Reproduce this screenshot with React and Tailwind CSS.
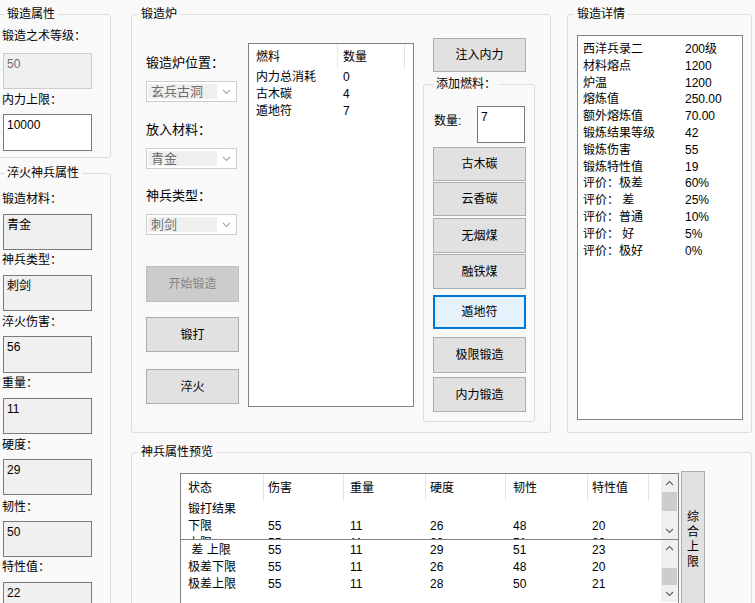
const BG = 'bg-[#f9f9f9]';

function Group({ title, className = '', titleClass = 'left-[6px]', children }) {
  return (
    <div className={`relative border border-[#dcdcdc] rounded-[3px] ${className}`}>
      <span className={`absolute -top-[9px] ${titleClass} px-[3px] leading-[16px] ${BG} whitespace-nowrap`}>
        {title}
      </span>
      {children}
    </div>
  );
}

function Btn({ children, className = '', variant = 'normal' }) {
  const look =
    variant === 'disabled'
      ? 'bg-[#cccccc] border border-[#bfbfbf] text-[#838383]'
      : variant === 'focus'
      ? 'bg-[#e5f1fb] border-2 border-[#0078d7]'
      : 'bg-[#e1e1e1] border border-[#adadad]';
  return (
    <div className={`flex items-center justify-center leading-[16px] ${look} ${className}`}>{children}</div>
  );
}

function TextBox({ children, className = '', kind = 'readonly' }) {
  const look =
    kind === 'disabled'
      ? 'bg-[#f0f0f0] border-[#cccccc] text-[#6d6d6d]'
      : kind === 'white'
      ? 'bg-white border-[#7a7a7a]'
      : 'bg-[#f0f0f0] border-[#7a7a7a]';
  return (
    <div className={`border pl-[3px] pt-[2px] leading-[16px] ${look} ${className}`}>{children}</div>
  );
}

function Chevron({ up = false, color = '#606060' }) {
  return (
    <svg width="9" height="6" viewBox="0 0 9 6">
      <path
        d={up ? 'M1 5 L4.5 1.5 L8 5' : 'M1 1 L4.5 4.5 L8 1'}
        fill="none"
        stroke={color}
        strokeWidth="1.1"
      />
    </svg>
  );
}

function Combo({ children, className = '' }) {
  return (
    <div className={`w-[91px] h-[21px] border border-[#cccccc] bg-white flex items-center pl-[1px] pr-[5px] ${className}`}>
      <span className="w-[69px] h-[15px] bg-[#efefef] pl-[3px] leading-[15px] text-[13px] text-[#6d6d6d]">
        {children}
      </span>
      <span className="ml-auto flex">
        <Chevron color="#a8a8a8" />
      </span>
    </div>
  );
}

const quench = [
  { label: '锻造材料：', value: '青金', lm: 'mt-[17px]', bm: 'mt-[7px] h-[36px]' },
  { label: '神兵类型：', value: '刺剑', lm: 'mt-[2px]', bm: 'mt-[7px] h-[36px]' },
  { label: '淬火伤害：', value: '56', lm: 'mt-[3px]', bm: 'mt-[6px] h-[37px]' },
  { label: '重量：', value: '11', lm: 'mt-[2px]', bm: 'mt-[7px] h-[36px]' },
  { label: '硬度：', value: '29', lm: 'mt-[3px]', bm: 'mt-[6px] h-[36px]' },
  { label: '韧性：', value: '50', lm: 'mt-[4px]', bm: 'mt-[6px] h-[36px]' },
  { label: '特性值：', value: '22', lm: 'mt-[2px]', bm: 'mt-[7px] h-[36px]' },
];

const fuels = [
  ['内力总消耗', '0'],
  ['古木碳', '4'],
  ['遁地符', '7'],
];

const fuelButtons = [
  { text: '古木碳', cls: 'mt-[4px] h-[34px]' },
  { text: '云香碳', cls: 'mt-[1px] h-[34px]' },
  { text: '无烟煤', cls: 'mt-[2px] h-[35px]' },
  { text: '融铁煤', cls: 'mt-[1px] h-[35px]' },
  { text: '遁地符', cls: 'mt-[6px] h-[34px]', variant: 'focus' },
  { text: '极限锻造', cls: 'mt-[8px] h-[36px]' },
  { text: '内力锻造', cls: 'mt-[4px] h-[35px]' },
];

const details = [
  ['西洋兵录二', '200级'],
  ['材料熔点', '1200'],
  ['炉温', '1200'],
  ['熔炼值', '250.00'],
  ['额外熔炼值', '70.00'],
  ['锻炼结果等级', '42'],
  ['锻炼伤害', '55'],
  ['锻炼特性值', '19'],
  ['评价：极差', '60%'],
  ['评价： 差', '25%'],
  ['评价：普通', '10%'],
  ['评价： 好', '5%'],
  ['评价：极好', '0%'],
];

const cols = [
  { name: '状态', cls: 'w-[83px] pl-[7px]' },
  { name: '伤害', cls: 'w-[80px] pl-[4px]' },
  { name: '重量', cls: 'w-[82px] pl-[6px]' },
  { name: '硬度', cls: 'w-[80px] pl-[4px]' },
  { name: '韧性', cls: 'w-[82px] pl-[7px]' },
  { name: '特性值', cls: 'w-[61px] pl-[4px]' },
];

const forged = [
  ['锻打结果', '', '', '', '', ''],
  ['下限', '55', '11', '26', '48', '20'],
  ['上限', '55', '11', '29', '51', '23'],
];

const ranges = [
  [' 差 上限', '55', '11', '29', '51', '23'],
  ['极差下限', '55', '11', '26', '48', '20'],
  ['极差上限', '55', '11', '28', '50', '21'],
];

function TableRow({ row }) {
  return (
    <div className="flex h-[17px] leading-[17px] shrink-0">
      {row.map((v, i) => (
        <div key={i} className={`${cols[i].cls} whitespace-pre shrink-0`}>
          {v}
        </div>
      ))}
    </div>
  );
}

function ScrollBar({ thumb, className = '' }) {
  return (
    <div className={`w-[17px] bg-[#f0f0f0] flex flex-col shrink-0 ${className}`}>
      <div className="h-[17px] flex items-center justify-center">
        <Chevron up />
      </div>
      <div className={`mx-[1px] bg-[#cdcdcd] ${thumb}`} />
      <div className="flex-1" />
      <div className="h-[17px] flex items-center justify-center">
        <Chevron />
      </div>
    </div>
  );
}

export default function App() {
  return (
    <div className={`w-[755px] h-[603px] overflow-hidden ${BG} flex items-start font-['Liberation_Sans','Noto_Sans_CJK_SC',sans-serif] text-[12px] text-black`}>
      {/* left column */}
      <div className="ml-[-3px] mt-[14px] w-[114px] shrink-0 flex flex-col">
        <Group title="锻造属性" className="h-[144px] pl-[4px] flex flex-col">
          <span className="mt-[13px] leading-[16px]">锻造之术等级：</span>
          <TextBox kind="disabled" className="ml-[1px] w-[89px] mt-[9px] h-[36px]">50</TextBox>
          <span className="mt-[3px] leading-[16px]">内力上限：</span>
          <TextBox kind="white" className="ml-[1px] w-[89px] mt-[6px] h-[37px]">10000</TextBox>
        </Group>
        <Group title="淬火神兵属性" className="mt-[15px] h-[440px] pl-[4px] flex flex-col">
          {quench.map((q) => (
            <div key={q.label} className="flex flex-col">
              <span className={`${q.lm} leading-[16px]`}>{q.label}</span>
              <TextBox className={`ml-[1px] w-[89px] ${q.bm}`}>{q.value}</TextBox>
            </div>
          ))}
        </Group>
      </div>

      <div className="ml-[20px] mt-[14px] w-[621px] shrink-0 flex flex-col">
        <div className="flex">
          {/* forge */}
          <Group title="锻造炉" className="w-[420px] h-[419px] flex items-start">
            <div className="ml-[14px] mt-[40px] w-[93px] flex flex-col">
              <span className="text-[13px] leading-[16px]">锻造炉位置：</span>
              <Combo className="mt-[10px]">玄兵古洞</Combo>
              <span className="mt-[20px] text-[13px] leading-[16px]">放入材料：</span>
              <Combo className="mt-[10px]">青金</Combo>
              <span className="mt-[19px] text-[13px] leading-[16px]">神兵类型：</span>
              <Combo className="mt-[10px]">刺剑</Combo>
              <Btn variant="disabled" className="mt-[31px] h-[36px]">开始锻造</Btn>
              <Btn className="mt-[15px] h-[35px]">锻打</Btn>
              <Btn className="mt-[17px] h-[35px]">淬火</Btn>
            </div>

            <div className="ml-[9px] mt-[28px] w-[166px] h-[364px] border border-[#828282] bg-white">
              <div className="flex h-[25px]">
                <div className="w-[89px] pl-[7px] flex items-center border-r border-[#e5e5e5]">燃料</div>
                <div className="w-[67px] pl-[5px] flex items-center border-r border-[#e5e5e5]">数量</div>
              </div>
              {fuels.map(([n, v]) => (
                <div key={n} className="flex h-[17px] leading-[17px]">
                  <div className="w-[89px] pl-[7px]">{n}</div>
                  <div className="pl-[5px]">{v}</div>
                </div>
              ))}
            </div>

            <div className="ml-[9px] mt-[23px] w-[112px] flex flex-col">
              <Btn className="ml-[10px] w-[93px] h-[34px]">注入内力</Btn>
              <Group title="添加燃料：" titleClass="left-[9px]" className="mt-[12px] h-[338px] flex flex-col">
                <div className="mt-[21px] flex items-start">
                  <span className="ml-[10px] mt-[7px] w-[43px] leading-[16px]">数量:</span>
                  <TextBox kind="white" className="w-[48px] h-[37px]">7</TextBox>
                </div>
                {fuelButtons.map((b) => (
                  <Btn key={b.text} variant={b.variant} className={`ml-[9px] w-[93px] ${b.cls}`}>
                    {b.text}
                  </Btn>
                ))}
              </Group>
            </div>
          </Group>

          {/* details */}
          <Group title="锻造详情" className="ml-[16px] w-[185px] h-[419px]">
            <div className="ml-[9px] mt-[20px] w-[166px] h-[385px] border border-[#828282] bg-white pt-[5px] pl-[5px]">
              {details.map(([k, v]) => (
                <div key={k} className="flex h-[16.8px] leading-[16.8px]">
                  <span className="w-[102px] whitespace-pre">{k}</span>
                  <span>{v}</span>
                </div>
              ))}
            </div>
          </Group>
        </div>

        {/* preview */}
        <Group title="神兵属性预览" className="mt-[19px] w-[621px] h-[200px]">
          <div className="ml-[48px] mt-[18px] flex items-start">
            <div className="mt-[2px] w-[499px] flex flex-col">
              <div className="h-[67px] border border-[#828282] bg-white flex overflow-hidden">
                <div className="flex-1 flex flex-col overflow-hidden">
                  <div className="flex h-[27px] shrink-0">
                    {cols.map((c) => (
                      <div key={c.name} className={`${c.cls} flex items-center border-r border-[#e5e5e5] shrink-0`}>
                        {c.name}
                      </div>
                    ))}
                  </div>
                  {forged.map((r) => (
                    <TableRow key={r[0]} row={r} />
                  ))}
                </div>
                <ScrollBar thumb="mt-[1px] h-[19px]" />
              </div>
              <div className="h-[80px] border-x border-[#828282] bg-white flex">
                <div className="flex-1 flex flex-col pt-[2px]">
                  {ranges.map((r) => (
                    <TableRow key={r[0]} row={r} />
                  ))}
                </div>
                <ScrollBar thumb="mt-[11px] h-[18px]" className="h-[62px]" />
              </div>
            </div>
            <Btn className="ml-[2px] w-[24px] h-[150px] !items-start pt-[38px]">
              <span className="flex flex-col items-center leading-[15px]">
                <span>综</span>
                <span>合</span>
                <span>上</span>
                <span>限</span>
              </span>
            </Btn>
          </div>
        </Group>
      </div>
    </div>
  );
}
